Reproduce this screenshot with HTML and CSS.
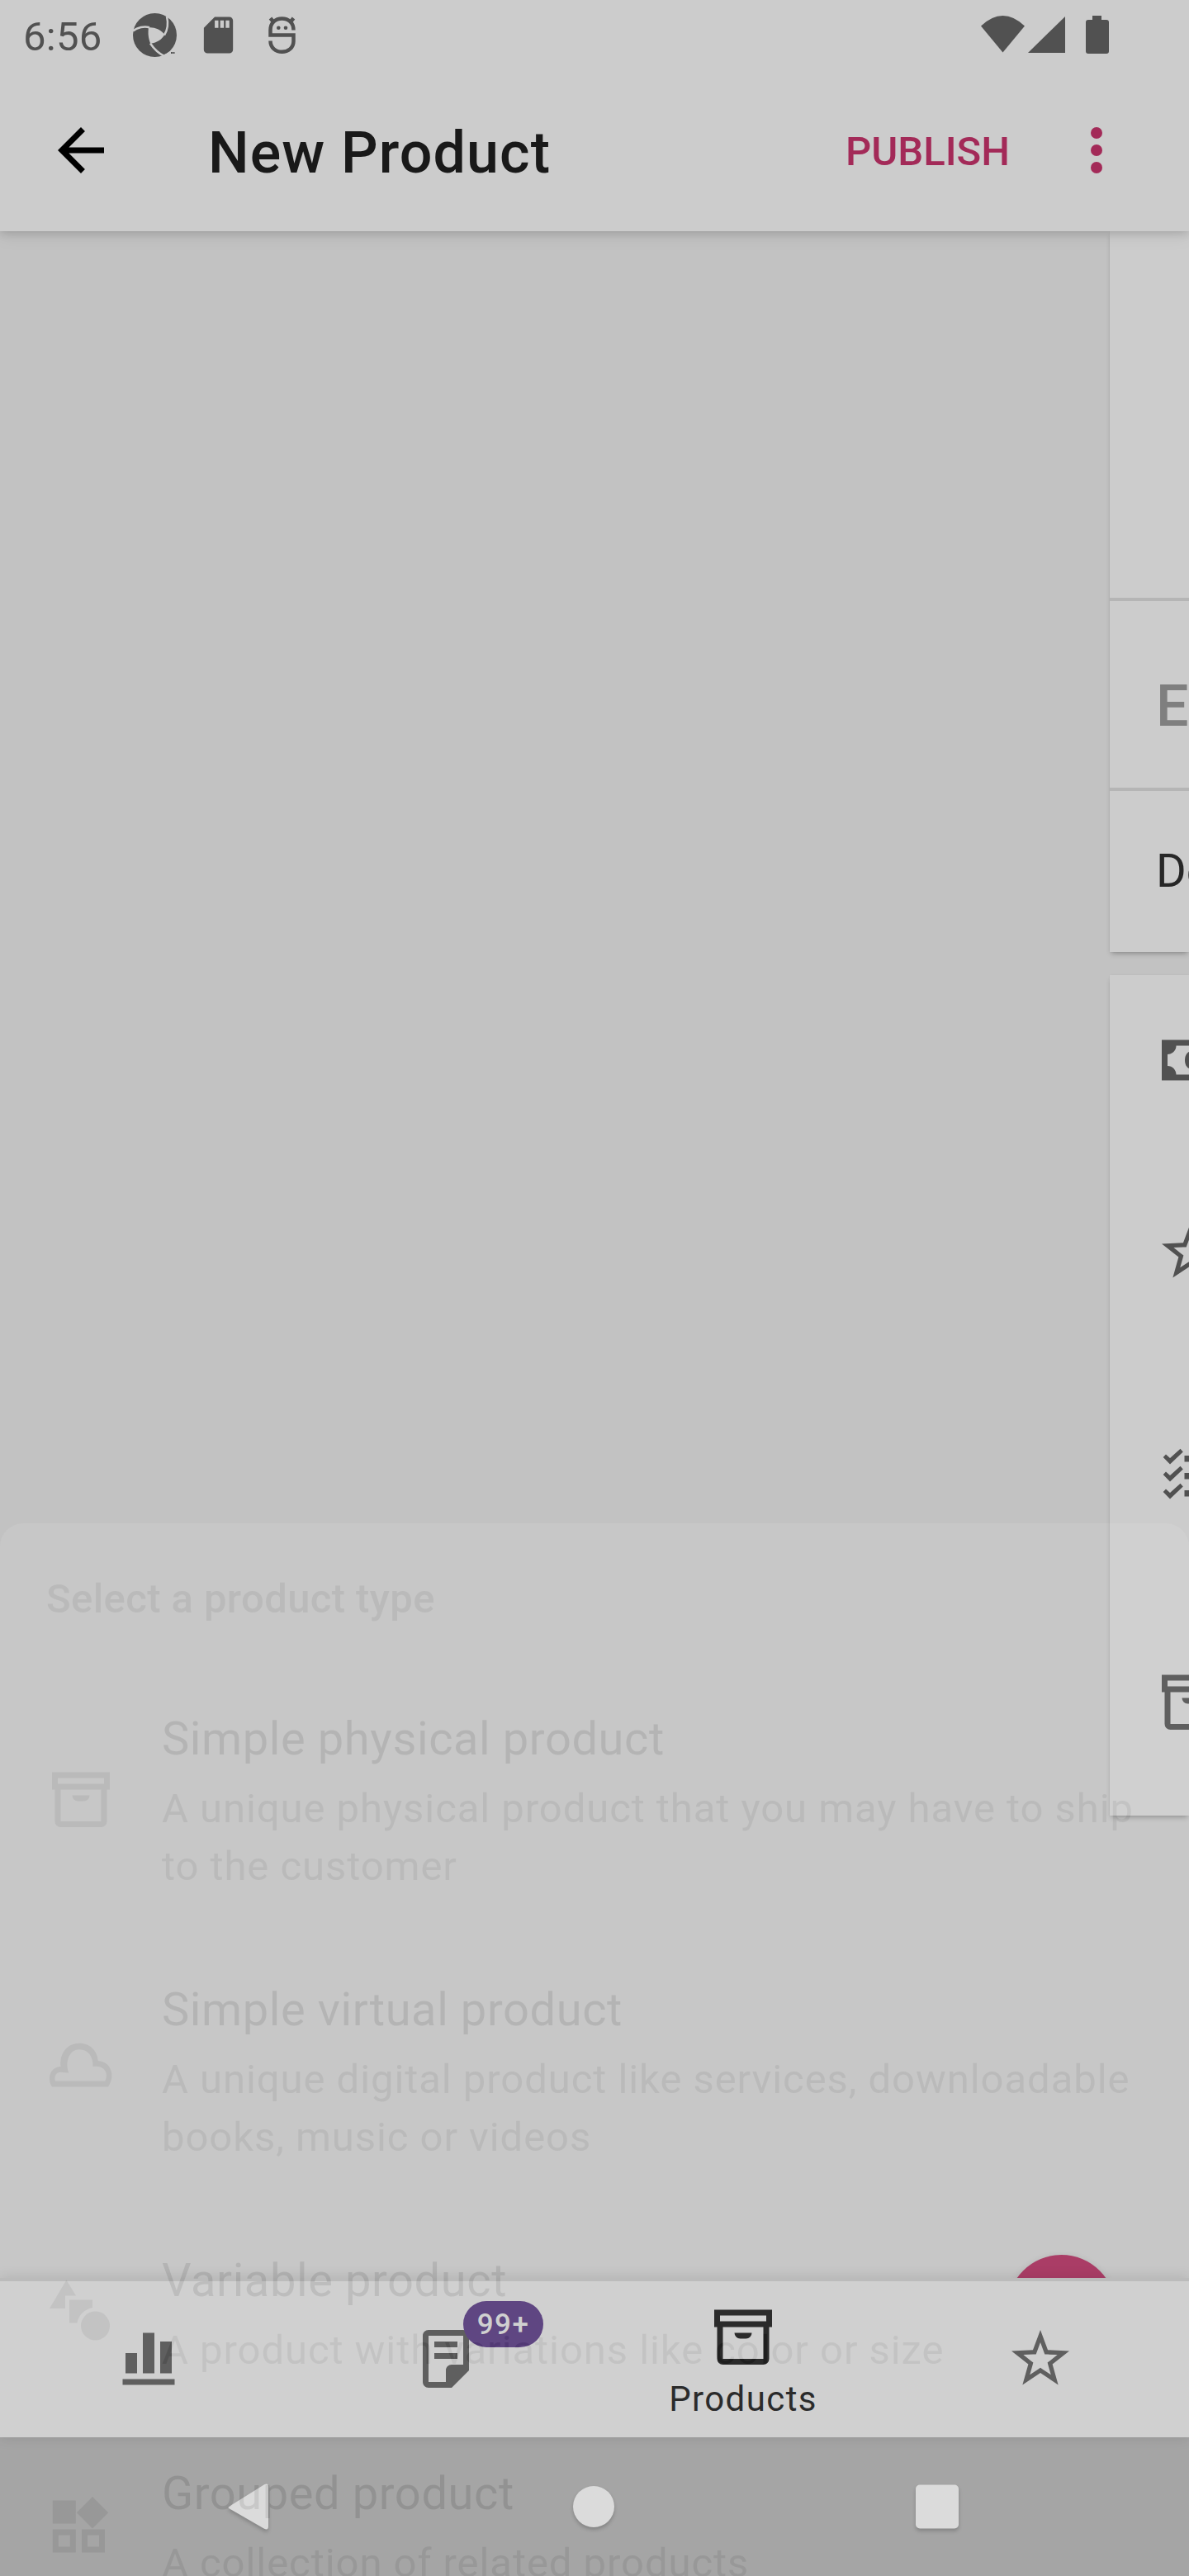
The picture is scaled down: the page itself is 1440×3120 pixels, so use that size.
FILE: index.html
```html
<!DOCTYPE html>
<html lang="en">
<head>
<meta charset="utf-8">
<title>New Product</title>
<link rel="stylesheet" href="styles.css">
</head>
<body>
<svg class="defs" width="0" height="0" aria-hidden="true">
  <symbol id="box" viewBox="0 0 24 24"><path fill-rule="evenodd" d="M22 3H2v6h1v11a2 2 0 0 0 2 2h14a2 2 0 0 0 2-2V9h1V3zM4 5h16v2H4V5zm15 15H5V9h14v11zM9 11h6a2 2 0 0 1-2 2h-2a2 2 0 0 1-2-2z"/></symbol>
  <symbol id="star" viewBox="0 0 24 24"><path d="M12 6.308l1.176 3.167.347.936.997.042 3.374.14-2.647 2.09-.784.62.27.963.91 3.25-2.813-1.872-.83-.553-.83.552-2.814 1.87.91-3.248.27-.962-.783-.62-2.648-2.092 3.374-.14.996-.04.347-.936L12 6.308M12 2L9.418 8.953 2 9.257l5.822 4.602L5.82 21 12 16.89 18.18 21l-2.002-7.14L22 9.256l-7.418-.305L12 2z"/></symbol>
</svg>
<div class="screen">
  <header class="top">
    <div class="status">
      <span class="clock">6:56</span>
      <div class="status-left">
        <svg class="sicon" viewBox="0 0 53 53"><circle cx="26.5" cy="26.5" r="26.5"/><path class="cut" d="M19 17.300C25 16.500 33 19 38.300 25.700 36 31 29 36 21.300 36.700 18.500 31 18 23 19 17.300z"/><g class="slit"><path d="M0 21.700C5 17 14 15.500 20 17.300"/><path d="M38 26.500C42 20 43 12 41 4"/><path d="M21 36.500C26 44 32 49 38 52"/></g><path class="cut" d="M36 53l0-2 7-3.500 10-4v10z"/><path d="M46 47h2v2h-2zm2.500 0h2v2h-2z"/></svg>
        <svg class="sicon" viewBox="0 0 24 24"><path d="M18 2h-8L4.020 8 4 20c0 1.100.900 2 2 2h12c1.100 0 2-.900 2-2V4c0-1.100-.900-2-2-2zm-6 6h-2V4h2v4zm3 0h-2V4h2v4zm3 0h-2V4h2v4z"/></svg>
        <svg class="sicon" viewBox="0 0 53 53"><g class="line"><path d="M40.500 20.500C40.500 11.500 34.500 6.500 26.500 6.500S12.500 11.500 12.500 20.500V26.500H40.500V34C40.500 42 34 46.800 26.500 46.800S12.500 42 12.500 33.500"/><path d="M12.500 6l4 5M40.500 6l-4 5"/></g><circle cx="22.300" cy="17.700" r="2.300"/><circle cx="31" cy="17.700" r="2.300"/></svg>
      </div>
      <div class="status-right">
        <svg width="53" height="46" viewBox="0 0 53 46"><path d="M0 12.500Q26.500-12.500 53 12.500L26.500 44.500z"/></svg>
        <svg class="signal" width="45" height="46" viewBox="0 0 45 46"><path d="M45 1v44H0z"/></svg>
        <svg class="battery" width="28" height="46" viewBox="0 0 28 46"><path d="M8 0h11v5h6q3 0 3 3v35q0 3-3 3H3q-3 0-3-3V8q0-3 3-3h5z"/></svg>
      </div>
    </div>
    <div class="appbar">
      <svg class="icon back" viewBox="0 0 24 24"><path d="M20 11H7.830l5.590-5.590L12 4l-8 8 8 8 1.410-1.410L7.830 13H20v-2z"/></svg>
      <h1>New Product</h1>
      <button class="publish">PUBLISH</button>
      <svg class="icon more" viewBox="0 0 24 24"><circle cx="12" cy="6" r="2"/><circle cx="12" cy="12" r="2"/><circle cx="12" cy="18" r="2"/></svg>
    </div>
  </header>

  <main class="content">
    <section class="panel">
      <div class="card first">
        <div class="photo"></div>
        <div class="field name">E</div>
        <div class="field desc">De</div>
      </div>
      <div class="card list">
        <div class="prop price"><svg class="icon" viewBox="0 0 24 24"><path fill-rule="evenodd" d="M2 5v14h20V5H2zm5 12c0-1.657-1.343-3-3-3v-4c1.657 0 3-1.343 3-3h10c0 1.657 1.343 3 3 3v4c-1.657 0-3 1.343-3 3H7z"/><path d="M12 9c1.100 0 2 1.300 2 3s-.900 3-2 3-2-1.300-2-3 .900-3 2-3z"/></svg></div>
        <div class="prop reviews"><svg class="icon"><use href="#star"/></svg></div>
        <div class="prop stock"><svg class="icon" viewBox="0 0 84 84"><g id="tick"><path d="M8.700 23.100L12 19.500 17 24 29.500 12.800 32.800 16.500 17 31.600zM34.500 21h42v7.500h-42z"/></g><use href="#tick" y="21"/><use href="#tick" y="42"/></svg></div>
        <div class="prop type"><svg class="icon"><use href="#box"/></svg></div>
      </div>
    </section>
    <div class="fab"></div>
  </main>

  <nav class="tabs">
    <div class="tab"><svg class="icon" viewBox="0 0 24 24"><path d="M21 21H3v-2h18v2zM8 10H4v7h4v-7zm6-7h-4v14h4V3zm6 3h-4v11h4V6z"/></svg></div>
    <div class="tab"><svg class="icon" viewBox="0 0 24 24"><path d="M16 8H8V6h8v2zm0 2H8v2h8v-2zm4-6v12l-6 6H6c-1.105 0-2-.895-2-2V4c0-1.105.895-2 2-2h12c1.105 0 2 .895 2 2zm-2 10V4H6v16h6v-4c0-1.105.895-2 2-2h4z"/></svg><span class="badge">99+</span></div>
    <div class="tab active"><svg class="icon"><use href="#box"/></svg><span>Products</span></div>
    <div class="tab"><svg class="icon"><use href="#star"/></svg></div>
  </nav>

  <nav class="system">
    <svg width="60" height="66" viewBox="0 0 60 66"><path d="M6 30.500L48 4.300Q53 2 53 7V55Q53 60 48 57.700L6 33.500Q3 32 6 30.500z"/></svg>
    <svg width="60" height="66" viewBox="0 0 60 66"><circle cx="30" cy="31" r="25"/></svg>
    <svg width="60" height="66" viewBox="0 0 60 66"><rect x="4" y="4.500" width="52" height="53" rx="5"/></svg>
  </nav>

  <aside class="sheet">
    <h2>Select a product type</h2>
    <div class="option">
      <svg class="icon"><use href="#box"/></svg>
      <div><h3>Simple physical product</h3><p>A unique physical product that you may have to ship<br>to the customer</p></div>
    </div>
    <div class="option">
      <svg class="icon" viewBox="0 0 84 84"><path fill-rule="evenodd" d="M7 63.500C1.500 55 3 40 17.500 39 16 22 26 10.800 40 10.800S62 21 62.700 32C79 33 84 51 75 63.500zM11 56.500H71.200C76 48 71 36.500 56.500 39 57 27 51 18.300 40 18.300S22 32 27.200 46.500L19 46C13 45 9 50 11 56.500z"/></svg>
      <div><h3>Simple virtual product</h3><p>A unique digital product like services, downloadable<br>books, music or videos</p></div>
    </div>
    <div class="option">
      <svg class="icon" viewBox="0 0 84 84"><path d="M24.400 4.500L36 23.500H23V39H4zM28 28.500H56V38C46 40 39 47 37.500 56.500H28z"/><circle cx="59.500" cy="60" r="17.500"/></svg>
      <div><h3>Variable product</h3><p>A product with variations like color or size</p></div>
    </div>
    <div class="option">
      <svg class="icon" viewBox="0 0 84 84"><path fill-rule="evenodd" d="M7.800 13.500h28v28h-28zM56 9l19.200 19.200L56 47.500 36.800 28.200zM7.800 48.500h28v28h-28zm7 7v14h14v-14zM43 48.500h28v28H43zm7 7v14h14v-14z"/></svg>
      <div><h3>Grouped product</h3><p>A collection of related products</p></div>
    </div>
  </aside>
</div>
</body>
</html>
```
FILE: styles.css
```css
* { box-sizing: border-box; }
body { margin: 0; font-family: Roboto, "Liberation Sans", sans-serif; background: #c2c2c2; }
h1, h2, h3, p { margin: 0; font-weight: 400; }
svg { display: block; flex: none; fill: currentColor; }
.defs { position: absolute; }
.icon { width: 84px; height: 84px; }

.screen { position: relative; width: 1440px; height: 3120px; overflow: hidden; display: flex; flex-direction: column; color: #515151; }

/* status bar and app bar */
.top { position: relative; z-index: 2; height: 280px; background: #ccc; box-shadow: 0 3px 10px rgba(0,0,0,.14), 0 6px 22px rgba(0,0,0,.06); }
.status { display: flex; height: 84px; padding: 0 97px 0 28px; }
.clock { width: 133px; padding-top: 15.500px; font-size: 49px; line-height: 58px; letter-spacing: .3px; }
.status-left { display: flex; gap: 24px; padding-top: 15.700px; }
.sicon { width: 53px; height: 53px; }
.cut { fill: #ccc; }
.slit { fill: none; stroke: #ccc; stroke-width: 2.500; }
.line { fill: none; stroke: currentColor; stroke-width: 4.500; }
.status-right { display: flex; margin-left: auto; padding-top: 19px; }
.signal { margin-left: 4px; }
.battery { margin-left: 25px; }
.appbar { display: flex; align-items: center; height: 196px; padding: 0 70px 0 56px; }
.back { color: #000; }
h1 { margin-left: 112px; font-size: 70px; line-height: 82px; font-weight: 500; color: #191919; letter-spacing: 1.100px; padding-top: 6px; }
.publish { margin-left: auto; padding: 3px 0 0; border: 0; background: none; font: 500 49px/58px Roboto, sans-serif; color: #a32a58; }
.more { margin-left: 63px; color: #a32a58; }

/* product detail sliding in from the right */
.content { position: relative; height: 2479px; background: #c2c2c2; overflow: hidden; }
.panel { width: 96px; margin-left: auto; }
.card { background: #ccc; box-shadow: 0 4px 6px -2px rgba(0,0,0,.28), 0 0 2px rgba(0,0,0,.06); overflow: hidden; }
.first { height: 873px; }
.photo { height: 448px; border-bottom: 4px solid #b5b5b5; }
.field { padding-left: 56px; white-space: nowrap; }
.name { height: 230px; padding-top: 86px; border-bottom: 4px solid #b5b5b5; font-size: 70px; line-height: 82px; font-weight: 500; color: #7f7f7f; }
.desc { padding-top: 64px; font-size: 56px; line-height: 66px; color: #272727; }
.list { margin-top: 28px; height: 1018px; padding-top: 61px; }
.prop { padding-left: 56px; }
.price { height: 232px; }
.reviews { height: 268px; }
.stock { height: 275.500px; }
.fab { position: absolute; left: 1220px; top: 2451px; width: 131px; height: 131px; border-radius: 50%; background: #a32c59; box-shadow: 0 3px 10px rgba(0,0,0,.15); }

/* bottom navigation */
.tabs { position: relative; display: flex; height: 193px; border-top: 4px solid #b5b5b5; background: #ccc; box-shadow: 0 0 16px rgba(0,0,0,.12); }
.tab { position: relative; width: 360px; display: flex; flex-direction: column; align-items: center; padding-top: 52px; }
.active { padding-top: 24px; color: #191919; font-size: 42px; line-height: 50px; letter-spacing: 1.400px; }
.active span { margin-top: 10px; }
.badge { position: absolute; left: 201px; top: 24px; width: 97px; height: 56px; border-radius: 28px; background: #513677; color: #ccc; text-align: center; font-size: 35px; line-height: 57px; font-weight: 500; letter-spacing: 1.500px; }

/* system navigation */
.system { display: flex; justify-content: space-between; height: 168px; padding: 53px 275px 0 272px; background: #9d9d9d; color: #d8d8d8; }
.system svg { filter: drop-shadow(0 3px 2px rgba(0,0,0,.22)); }

/* product type sheet, fading out over the screen */
.sheet { position: absolute; z-index: 3; left: 0; top: 1845px; width: 1440px; height: 1275px; padding-top: 63px; border-radius: 28px 28px 0 0; background: #fff; opacity: .08; overflow: hidden; color: #666; }
h2 { height: 105.500px; padding-left: 56px; font-size: 49px; line-height: 58px; font-weight: 500; letter-spacing: .4px; }
.option { display: flex; align-items: center; gap: 56px; padding: 0 56px; }
.option > div { padding: 59.500px 0 46px; white-space: nowrap; }
h3 { font-size: 56px; line-height: 66px; color: #1c1c1c; letter-spacing: .6px; }
p { margin-top: 16.500px; font-size: 49px; line-height: 70px; letter-spacing: .94px; }
```
